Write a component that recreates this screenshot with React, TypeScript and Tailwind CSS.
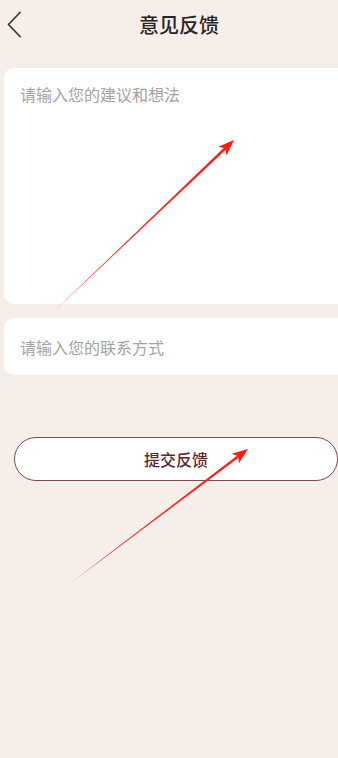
const font = { fontFamily: '"Noto Sans CJK SC", "Noto Sans", sans-serif' };

function Arrow({ id, x1, y1, x2, y2 }: { id: string; x1: number; y1: number; x2: number; y2: number }) {
  const dx = x2 - x1;
  const dy = y2 - y1;
  const len = Math.hypot(dx, dy);
  const ux = dx / len;
  const uy = dy / len;
  const px = -uy;
  const py = ux;
  const headLen = 16;
  const headW = 6;
  const bx = x2 - ux * headLen;
  const by = y2 - uy * headLen;
  const shaftW = 2.6;
  const nx = x2 - ux * (headLen - 4);
  const ny = y2 - uy * (headLen - 4);
  const shaft = `${x1},${y1} ${nx + (px * shaftW) / 2},${ny + (py * shaftW) / 2} ${nx - (px * shaftW) / 2},${ny - (py * shaftW) / 2}`;
  const head = `${x2},${y2} ${bx + px * headW},${by + py * headW} ${nx},${ny} ${bx - px * headW},${by - py * headW}`;
  return (
    <g>
      <defs>
        <linearGradient id={id} gradientUnits="userSpaceOnUse" x1={x1} y1={y1} x2={x2} y2={y2}>
          <stop offset="0" stopColor="#ff1a12" stopOpacity="0.3" />
          <stop offset="0.2" stopColor="#ff1a12" stopOpacity="0.9" />
          <stop offset="1" stopColor="#ff1a12" />
        </linearGradient>
      </defs>
      <polygon points={shaft} fill={`url(#${id})`} />
      <polygon points={head} fill="#ff1a12" />
    </g>
  );
}

export default function App() {
  return (
    <div className="relative h-[758px] w-[338px] overflow-hidden bg-[#f6eee9]" style={font}>
      <header className="relative flex h-[50px] items-center justify-center pl-[20px]">
        <svg className="absolute left-[6px] top-[11px]" width="16" height="27" viewBox="0 0 16 27">
          <path d="M14 1.5 L2.5 13.5 L14 25.5" fill="none" stroke="#3a3a3a" strokeWidth="1.8" strokeLinecap="round" strokeLinejoin="round" />
        </svg>
        <h1 className="text-[20px] font-medium text-[#262626]">意见反馈</h1>
      </header>

      <div className="ml-[4px] mt-[18px] flex w-[350px] flex-col gap-[14px]">
        <div className="h-[236px] rounded-[10px] bg-white px-[16px] pt-[14px]">
          <p className="text-[16px] leading-[24px] text-[#a3a3a3]">请输入您的建议和想法</p>
        </div>
        <div className="flex h-[57px] items-center rounded-[10px] bg-white px-[16px]">
          <p className="text-[16px] leading-[24px] text-[#a3a3a3]">请输入您的联系方式</p>
        </div>
      </div>

      <div className="ml-[14px] mt-[62px] flex h-[44px] w-[324px] items-center justify-center rounded-full border border-[#7a4a50] bg-white">
        <span className="text-[16px] font-medium text-[#5a2a32]">提交反馈</span>
      </div>

      <svg className="pointer-events-none absolute left-0 top-0" width="338" height="758">
        <Arrow id="a1" x1={47} y1={318} x2={234} y2={140} />
        <Arrow id="a2" x1={64} y1={588} x2={248} y2={449} />
      </svg>
    </div>
  );
}
